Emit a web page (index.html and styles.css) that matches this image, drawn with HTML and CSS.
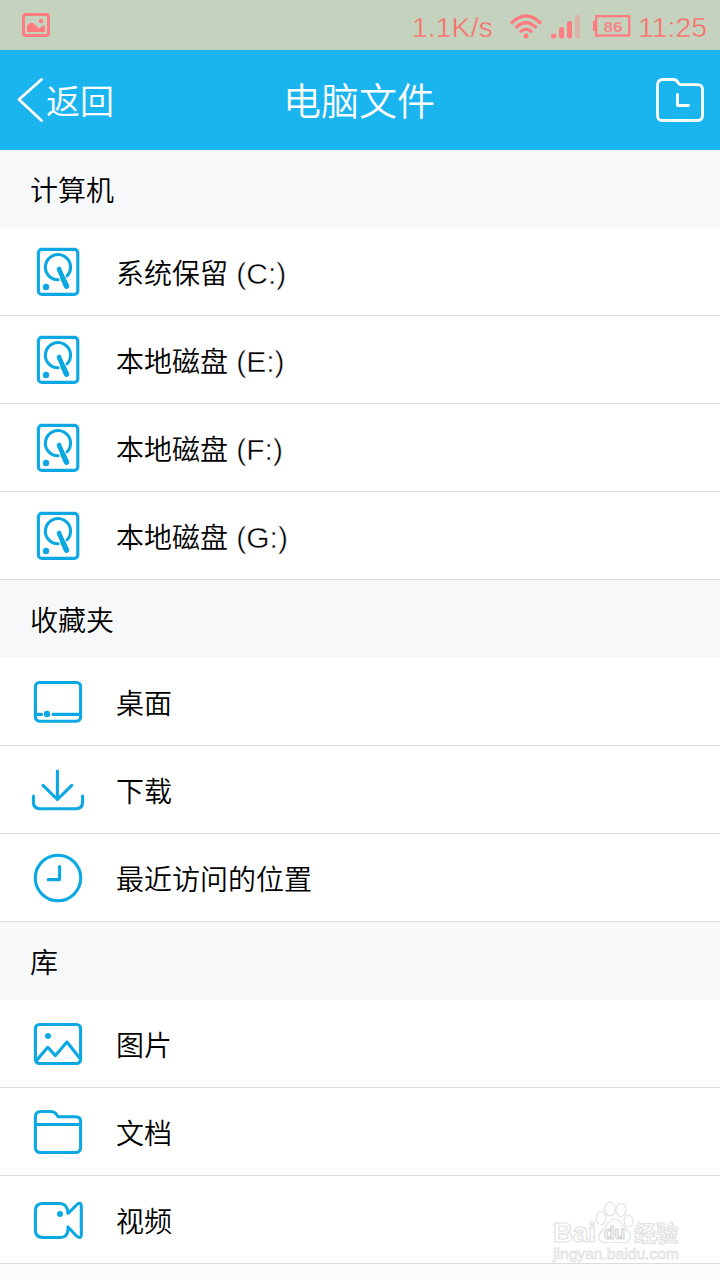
FILE: index.html
```html
<!DOCTYPE html>
<html lang="zh-CN">
<head>
  <meta charset="UTF-8">
  <meta name="viewport" content="width=device-width, initial-scale=1.0">
  <title>电脑文件</title>
  <link rel="stylesheet" href="styles.css">
</head>
<body>
  <!-- shared disk icon -->
  <svg class="defs" width="0" height="0">
    <symbol id="disk" viewBox="0 0 56 56">
      <rect x="8.4" y="5.4" width="39.4" height="45" rx="3.5"/>
      <path d="M28 35.8A12.6 12.6 0 1 1 37.2 31.8"/>
      <path d="M29 25L36.5 42.3" stroke-width="4.6"/>
      <path d="M33 34.5L36.5 42.2" stroke-width="5.4"/>
      <circle class="dot" cx="16" cy="43" r="3.2"/>
    </symbol>
  </svg>

  <div class="statusbar">
    <svg class="shot" width="28" height="24" viewBox="0 0 28 24">
      <rect x="1.5" y="1.5" width="25" height="21" rx="2.5" fill="none" stroke="#ff7b80" stroke-width="3"/>
      <circle cx="19" cy="8" r="2.2"/>
      <path d="M5 19V13.5C6.5 9 11 8.5 13.5 12L17 15.5L20 13.2Q21.5 12.3 23 13.5V19Z"/>
    </svg>
    <span class="speed">1.1K/s</span>
    <svg class="wifi" width="32" height="25" viewBox="0 0 32 25">
      <g fill="none" stroke="#ff7b80" stroke-width="3.3" stroke-linecap="round">
        <path d="M2 8.5Q16 -4.5 30 8.5"/>
        <path d="M6.5 13Q16 4.5 25.5 13"/>
        <path d="M11 17.2Q16 13 21 17.2"/>
      </g>
      <circle cx="16" cy="22" r="2.5"/>
    </svg>
    <svg class="signal" width="30" height="24" viewBox="0 0 30 24">
      <circle cx="2.7" cy="21" r="2.6"/>
      <rect x="8" y="12" width="5" height="11.5" rx="2"/>
      <rect x="16" y="6" width="5" height="17.5" rx="2"/>
      <rect x="24" y="0" width="5" height="23.5" rx="2" opacity=".35"/>
    </svg>
    <svg class="battery" width="38" height="22" viewBox="0 0 38 22">
      <rect x="3.2" y="1.2" width="33" height="19.3" fill="none" stroke="#ff7b80" stroke-width="2.3"/>
      <rect x="0" y="6" width="3.5" height="10"/>
      <text x="10.5" y="16.5" textLength="19" lengthAdjust="spacingAndGlyphs">86</text>
    </svg>
    <span class="time">11:25</span>
  </div>

  <div class="header">
    <div class="back">
      <svg width="31" height="46" viewBox="0 0 31 46">
        <path d="M25.5 2.5L3 22.5L25.5 43.5"/>
      </svg>
      <span>返回</span>
    </div>
    <h1>电脑文件</h1>
    <svg class="recent" width="48" height="44" viewBox="0 0 48 44">
      <path d="M1.5 7Q1.5 1.5 7 1.5H17.5Q20.5 1.5 22 4.5Q23 6.7 25 6.7H41.5Q46.5 6.7 46.5 11.5V37.5Q46.5 42.5 41.5 42.5H6.5Q1.5 42.5 1.5 37.5Z"/>
      <path d="M21.5 16.5V27.5H32.5"/>
    </svg>
  </div>

  <h2>计算机</h2>
  <ul>
    <li><svg class="icon"><use href="#disk"/></svg><span>系统保留 <i>(C:)</i></span></li>
    <li><svg class="icon"><use href="#disk"/></svg><span>本地磁盘 <i>(E:)</i></span></li>
    <li><svg class="icon"><use href="#disk"/></svg><span>本地磁盘 <i>(F:)</i></span></li>
    <li><svg class="icon"><use href="#disk"/></svg><span>本地磁盘 <i>(G:)</i></span></li>
  </ul>

  <h2>收藏夹</h2>
  <ul>
    <li>
      <svg class="icon" viewBox="0 0 56 56">
        <rect x="5.4" y="8.5" width="45.2" height="38.7" rx="4"/>
        <path d="M6 40.4H11.5M23 40.4H50"/>
        <circle class="dot" cx="17" cy="40" r="3.2"/>
      </svg>
      <span>桌面</span>
    </li>
    <li>
      <svg class="icon" viewBox="0 0 56 56">
        <path d="M27.4 9V37.5M13 23.3L27.4 37.5L41.8 23.3"/>
        <path d="M3.4 34V40Q3.4 46.7 10 46.7H46Q52.6 46.7 52.6 40V34"/>
      </svg>
      <span>下载</span>
    </li>
    <li>
      <svg class="icon" viewBox="0 0 56 56">
        <circle cx="28" cy="28" r="22.7"/>
        <path d="M29.6 16.5V29.6H18.2"/>
      </svg>
      <span>最近访问的位置</span>
    </li>
  </ul>

  <h2>库</h2>
  <ul>
    <li>
      <svg class="icon" viewBox="0 0 56 56">
        <rect x="5.4" y="8.5" width="45.2" height="39" rx="4"/>
        <path d="M6.5 44.5L17.7 31.3L25.4 39.6L37 26L50 42.5"/>
        <circle class="dot" cx="18" cy="20" r="3"/>
      </svg>
      <span>图片</span>
    </li>
    <li>
      <svg class="icon" viewBox="0 0 56 56">
        <path d="M5.4 13Q5.4 7.5 11 7.5H20.5Q24.5 7.5 26.5 10.5L28 12.7H45.5Q50.6 12.7 50.6 17.5V43.5Q50.6 48.5 45.5 48.5H10.5Q5.4 48.5 5.4 43.5Z"/>
        <path d="M6 20.5H50"/>
      </svg>
      <span>文档</span>
    </li>
    <li>
      <svg class="icon" viewBox="0 0 56 56">
        <path d="M38 21.5L47 12.5Q51.3 9.5 51.3 14V42.5Q51.3 47 47 44.5L38 35V37.5Q37.5 45.5 30.5 45.5H13Q5.4 45.5 5.4 38V19Q5.4 11.5 13 11.5H30.5Q37.5 12 38 21.5Z"/>
        <circle class="dot" cx="30" cy="22" r="3"/>
      </svg>
      <span>视频</span>
    </li>
  </ul>

  <svg class="watermark" width="136" height="66" viewBox="0 0 136 66">
    <text class="wm-bai" x="3" y="42" textLength="43" lengthAdjust="spacingAndGlyphs">Bai</text>
    <ellipse cx="51" cy="18" rx="5" ry="6.5"/>
    <ellipse cx="60" cy="9" rx="5" ry="6.8"/>
    <ellipse cx="71" cy="10" rx="5" ry="6.5"/>
    <ellipse cx="78.5" cy="21" rx="4.5" ry="6"/>
    <path d="M64 19C57 20 56 28 51 32C46 38 50 43 57 43C62 42 67 42 73 43C80 43 83 37 78 31C73 27 72 20 64 19Z"/>
    <text class="wm-du" x="54" y="39" textLength="21" lengthAdjust="spacingAndGlyphs">du</text>
    <text class="wm-cn" x="84" y="41" textLength="44">经验</text>
    <text class="wm-url" x="3" y="59" textLength="126" lengthAdjust="spacingAndGlyphs">jingyan.baidu.com</text>
  </svg>
</body>
</html>
```
FILE: styles.css
```css
* {
  box-sizing: border-box;
}

body {
  margin: 0;
  height: 1280px;
  position: relative;
  overflow: hidden;
  background: #fafbfb;
  color: #000;
  font-family: 'Noto Sans CJK SC', sans-serif;
  font-weight: 350;
}

.defs {
  position: absolute;
}

.statusbar {
  display: flex;
  height: 50px;
  padding: 0 12px 0 22px;
  background: #c5d3be;
  color: #ff6b68;
  fill: #ff7b80;
  font-family: 'Liberation Sans', sans-serif;
  font-size: 28.5px;
  line-height: 54px;
}

.speed,
.time {
  -webkit-text-stroke: .5px #c5d3be;
}

.shot {
  margin-top: 13px;
}

.speed {
  width: 81px;
  margin-left: auto;
}

.wifi {
  margin: 14px 0 0 17px;
}

.signal {
  margin: 15px 0 0 9px;
}

.battery {
  margin: 15px 0 0 12px;
}

.battery text {
  font: bold 14px 'Liberation Sans', sans-serif;
  opacity: .85;
}

.time {
  width: 70px;
  margin-left: 7px;
}

.header {
  display: grid;
  grid-template-columns: 1fr auto 1fr;
  align-items: center;
  height: 100px;
  padding: 0 16px;
  background: #1ab4ef;
  color: #fff;
}

.header path {
  fill: none;
  stroke: #fff;
  stroke-width: 2.8;
  stroke-linecap: round;
  stroke-linejoin: round;
}

.back {
  display: flex;
  align-items: center;
  font-size: 34px;
  line-height: 50px;
}

.back span {
  margin-left: -1px;
}

.header h1 {
  margin: 0 2px 3px 0;
  font-size: 38px;
  font-weight: 350;
  line-height: 56px;
}

.recent {
  justify-self: end;
}

h2 {
  height: 78px;
  margin: 0;
  padding: 0 30px;
  background: #f7f8fa;
  font-size: 28px;
  font-weight: 350;
  line-height: 78px;
}

ul {
  margin: 0;
  padding: 0;
  list-style: none;
}

li {
  display: flex;
  height: 88px;
  padding: 16px 30px 15px;
  border-bottom: 1px solid #dcdddd;
  background: #fff;
  font-size: 28px;
  line-height: 56px;
}

.icon {
  flex: none;
  width: 56px;
  height: 56px;
  margin-right: 30px;
  fill: none;
  stroke: #0ba8e4;
  stroke-width: 3.1;
  stroke-linecap: round;
  stroke-linejoin: round;
}

.dot {
  fill: #0ba8e4;
  stroke: none;
}

li i {
  margin-left: 2px;
  font-family: 'Liberation Sans', sans-serif;
  font-style: normal;
  font-size: 30px;
  -webkit-text-stroke: .5px #fff;
}

/* site mark in the corner */
.watermark {
  position: absolute;
  left: 550px;
  top: 1200px;
  fill: #fff;
  stroke: #e2e2e2;
  stroke-width: 1.2;
}

.wm-bai {
  font: bold 27px 'Liberation Sans', sans-serif;
}

.wm-du {
  font: bold 19px 'Liberation Sans', sans-serif;
  stroke: #d2d2d2;
}

.wm-cn {
  font: bold 22px 'Noto Sans CJK SC', sans-serif;
}

.wm-url {
  font: 14px 'Liberation Sans', sans-serif;
  stroke-width: .8;
}
```
